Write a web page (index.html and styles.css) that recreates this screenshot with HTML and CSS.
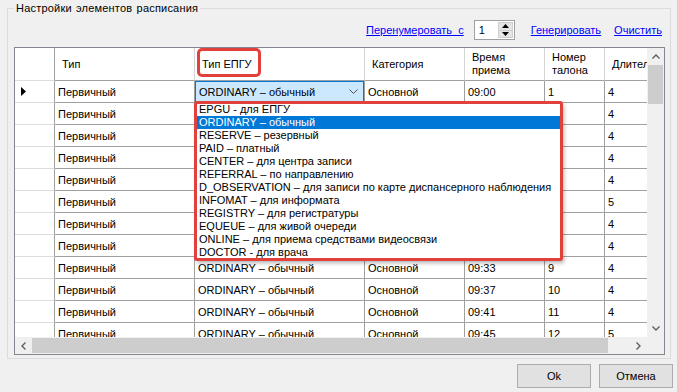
FILE: index.html
```html
<!DOCTYPE html>
<html lang="ru">
<head>
    <meta charset="UTF-8">
    <title>Настройки элементов расписания</title>
    <link rel="stylesheet" href="styles.css">
</head>
<body>
    <fieldset class="group">
        <legend>Настройки элементов расписания</legend>
        <div class="toolbar">
            <a class="link link-renum" href="#">Перенумеровать&nbsp; с</a>
            <div class="spin">
                <span class="spin-value">1</span>
                <div class="spin-buttons">
                    <span class="spin-btn"><svg width="7" height="4" viewBox="0 0 7 4"><polygon points="0,4 3.5,0 7,4" fill="#000"/></svg></span>
                    <span class="spin-btn"><svg width="7" height="4" viewBox="0 0 7 4"><polygon points="0,0 3.5,4 7,0" fill="#000"/></svg></span>
                </div>
            </div>
            <a class="link link-gen" href="#">Генерировать</a>
            <a class="link link-clear" href="#">Очистить</a>
        </div>

        <div class="grid">
            <div class="viewport">
                <table class="data">
                    <colgroup>
                        <col style="width:40px">
                        <col style="width:140px">
                        <col style="width:170px">
                        <col style="width:100px">
                        <col style="width:80px">
                        <col style="width:60px">
                        <col style="width:110px">
                    </colgroup>
                    <thead>
                        <tr>
                            <th class="rowhead"></th>
                            <th>Тип</th>
                            <th>Тип ЕПГУ</th>
                            <th>Категория</th>
                            <th>Время<br>приема</th>
                            <th>Номер<br>талона</th>
                            <th>Длительность</th>
                        </tr>
                    </thead>
                    <tbody>
                        <tr>
                            <td class="rowhead"><svg class="current" width="5" height="9" viewBox="0 0 5 9"><polygon points="0,0 5,4.5 0,9" fill="#000"/></svg></td>
                            <td>Первичный</td>
                            <td class="combo">
                                <div class="combo-inner">
                                    <span>ORDINARY – обычный</span>
                                    <svg width="9" height="5" viewBox="0 0 9 5"><polyline points="0.5,0.5 4.5,4.5 8.5,0.5" fill="none" stroke="#505050" stroke-width="1"/></svg>
                                </div>
                            </td>
                            <td>Основной</td><td>09:00</td><td>1</td><td>4</td>
                        </tr>
                        <tr><td class="rowhead"></td><td>Первичный</td><td>ORDINARY – обычный</td><td>Основной</td><td>09:04</td><td>2</td><td>4</td></tr>
                        <tr><td class="rowhead"></td><td>Первичный</td><td>ORDINARY – обычный</td><td>Основной</td><td>09:08</td><td>3</td><td>4</td></tr>
                        <tr><td class="rowhead"></td><td>Первичный</td><td>ORDINARY – обычный</td><td>Основной</td><td>09:12</td><td>4</td><td>4</td></tr>
                        <tr><td class="rowhead"></td><td>Первичный</td><td>ORDINARY – обычный</td><td>Основной</td><td>09:16</td><td>5</td><td>4</td></tr>
                        <tr><td class="rowhead"></td><td>Первичный</td><td>ORDINARY – обычный</td><td>Основной</td><td>09:20</td><td>6</td><td>5</td></tr>
                        <tr><td class="rowhead"></td><td>Первичный</td><td>ORDINARY – обычный</td><td>Основной</td><td>09:25</td><td>7</td><td>4</td></tr>
                        <tr><td class="rowhead"></td><td>Первичный</td><td>ORDINARY – обычный</td><td>Основной</td><td>09:29</td><td>8</td><td>4</td></tr>
                        <tr><td class="rowhead"></td><td>Первичный</td><td>ORDINARY – обычный</td><td>Основной</td><td>09:33</td><td>9</td><td>4</td></tr>
                        <tr><td class="rowhead"></td><td>Первичный</td><td>ORDINARY – обычный</td><td>Основной</td><td>09:37</td><td>10</td><td>4</td></tr>
                        <tr><td class="rowhead"></td><td>Первичный</td><td>ORDINARY – обычный</td><td>Основной</td><td>09:41</td><td>11</td><td>4</td></tr>
                        <tr><td class="rowhead"></td><td>Первичный</td><td>ORDINARY – обычный</td><td>Основной</td><td>09:45</td><td>12</td><td>5</td></tr>
                    </tbody>
                </table>
            </div>

            <div class="vscroll">
                <span class="sb-btn"><svg width="8" height="5" viewBox="0 0 8 5"><polyline points="0.5,4.5 4,1 7.5,4.5" fill="none" stroke="#606060" stroke-width="1.4"/></svg></span>
                <div class="sb-track"><div class="sb-thumb"></div></div>
                <span class="sb-btn"><svg width="8" height="5" viewBox="0 0 8 5"><polyline points="0.5,0.5 4,4 7.5,0.5" fill="none" stroke="#606060" stroke-width="1.4"/></svg></span>
            </div>
            <div class="hscroll">
                <span class="sb-btn"><svg width="5" height="8" viewBox="0 0 5 8"><polyline points="4.5,0.5 1,4 4.5,7.5" fill="none" stroke="#606060" stroke-width="1.4"/></svg></span>
                <div class="sb-track"><div class="sb-thumb"></div></div>
                <span class="sb-btn"><svg width="5" height="8" viewBox="0 0 5 8"><polyline points="0.5,0.5 4,4 0.5,7.5" fill="none" stroke="#606060" stroke-width="1.4"/></svg></span>
            </div>
            <div class="corner"></div>

            <div class="mark mark-head"></div>
            <ul class="dropdown">
                <li>EPGU - для ЕПГУ</li>
                <li class="selected">ORDINARY – обычный</li>
                <li>RESERVE – резервный</li>
                <li>PAID – платный</li>
                <li>CENTER – для центра записи</li>
                <li>REFERRAL – по направлению</li>
                <li>D_OBSERVATION – для записи по карте диспансерного наблюдения</li>
                <li>INFOMAT – для информата</li>
                <li>REGISTRY – для регистратуры</li>
                <li>EQUEUE – для живой очереди</li>
                <li>ONLINE – для приема средствами видеосвязи</li>
                <li>DOCTOR - для врача</li>
            </ul>
        </div>
    </fieldset>

    <div class="actions">
        <button class="btn">Ok</button>
        <button class="btn">Отмена</button>
    </div>
</body>
</html>
```

FILE: styles.css
```css
body {
    margin: 0;
    width: 677px;
    height: 392px;
    overflow: hidden;
    background: #f0f0f0;
    color: #000;
    font-family: "Liberation Sans", Arial, sans-serif;
    font-size: 11px;
}
.group {
    margin: 2px 6px 0 7px;
    padding: 0 5px 3px 6px;
    border: 1px solid #dcdcdc;
    min-width: 0;
}
.group legend {
    padding: 0 2px;
    line-height: 13px;
    letter-spacing: 0.2px;
    word-spacing: 1px;
}
.toolbar {
    display: flex;
    align-items: center;
    justify-content: flex-end;
    height: 20px;
    margin: 5px 3px 7px 0;
}
.link {
    color: #0000ff;
    text-decoration: underline;
}
.link-gen {
    margin-left: 16px;
}
.link-clear {
    margin-left: 13px;
}
.spin {
    display: flex;
    width: 41px;
    height: 20px;
    margin-left: 10px;
    box-sizing: border-box;
    border: 1px solid #a0a0a0;
    background: #fff;
}
.spin-value {
    flex: 1;
    padding-left: 4px;
    line-height: 18px;
}
.spin-buttons {
    display: flex;
    flex-direction: column;
    width: 15px;
    padding: 1px 1px 1px 0;
}
.spin-btn {
    flex: 1;
    display: flex;
    align-items: center;
    justify-content: center;
    background: #e5e5e5;
    border: 1px solid #cfcfcf;
}
.spin-btn + .spin-btn {
    border-top: none;
}

.grid {
    position: relative;
    display: grid;
    grid-template-columns: 632px 17px;
    grid-template-rows: 289px 17px;
    border: 1px solid #828790;
    background: #fff;
    width: 649px;
}
.viewport {
    overflow: hidden;
}
.data {
    border-collapse: separate;
    border-spacing: 0;
    table-layout: fixed;
    width: 700px;
}
.data th,
.data td {
    border-right: 1px solid #a0a0a0;
    border-bottom: 1px solid #a0a0a0;
    padding: 0 3px;
    white-space: nowrap;
    overflow: hidden;
    text-align: left;
    font-weight: normal;
}
.data thead tr {
    height: 33px;
}
.data tbody tr {
    height: 22px;
}
.data th {
    padding-left: 7px;
    line-height: 13px;
    border-right-color: #d5d5d5;
}
.data .rowhead {
    border-right-color: #a0a0a0;
    border-bottom-color: #dedede;
    padding-left: 6px;
}
.current {
    display: block;
}
.data td.combo {
    padding: 0 0 0 4px;
    background: #cce8ff;
    box-shadow: inset 0 0 0 1px #0078d7;
}
.combo-inner {
    display: flex;
    align-items: center;
    justify-content: space-between;
    padding-right: 6px;
}

.vscroll,
.hscroll {
    display: flex;
    background: #f0f0f0;
}
.vscroll {
    flex-direction: column;
}
.sb-btn {
    flex: 0 0 17px;
    display: flex;
    align-items: center;
    justify-content: center;
}
.sb-track {
    flex: 1;
}
.vscroll .sb-track {
    padding: 0 1px;
}
.vscroll .sb-thumb {
    height: 39px;
    background: #cdcdcd;
}
.hscroll .sb-track {
    padding: 1px 0;
}
.hscroll .sb-thumb {
    width: 576px;
    height: 100%;
    background: #cdcdcd;
}
.corner {
    background: #f0f0f0;
}

.mark {
    position: absolute;
    box-sizing: border-box;
    border: 3px solid #e2403a;
    border-radius: 5px;
}
.mark-head {
    left: 182px;
    top: 0;
    width: 64px;
    height: 29px;
}
.dropdown {
    position: absolute;
    left: 180px;
    top: 54px;
    width: 367px;
    height: 158px;
    box-sizing: border-box;
    margin: 0;
    padding: 0;
    list-style: none;
    background: #fff;
    border: 1px solid #646464;
    box-shadow: 2px 3px 4px rgba(0, 0, 0, 0.3);
}
.dropdown::after {
    content: "";
    position: absolute;
    inset: -2px;
    border: 3px solid #e2403a;
    border-radius: 3px;
}
.dropdown li {
    height: 13px;
    line-height: 13px;
    padding-left: 3px;
    white-space: nowrap;
}
.dropdown li.selected {
    background: #0078d7;
    color: #fff;
}

.actions {
    display: flex;
    justify-content: flex-end;
    gap: 8px;
    margin-top: 5px;
    padding-right: 4px;
}
.btn {
    width: 74px;
    height: 24px;
    padding: 0;
    border: 1px solid #adadad;
    background: #e1e1e1;
    font: inherit;
    color: #000;
}
```
